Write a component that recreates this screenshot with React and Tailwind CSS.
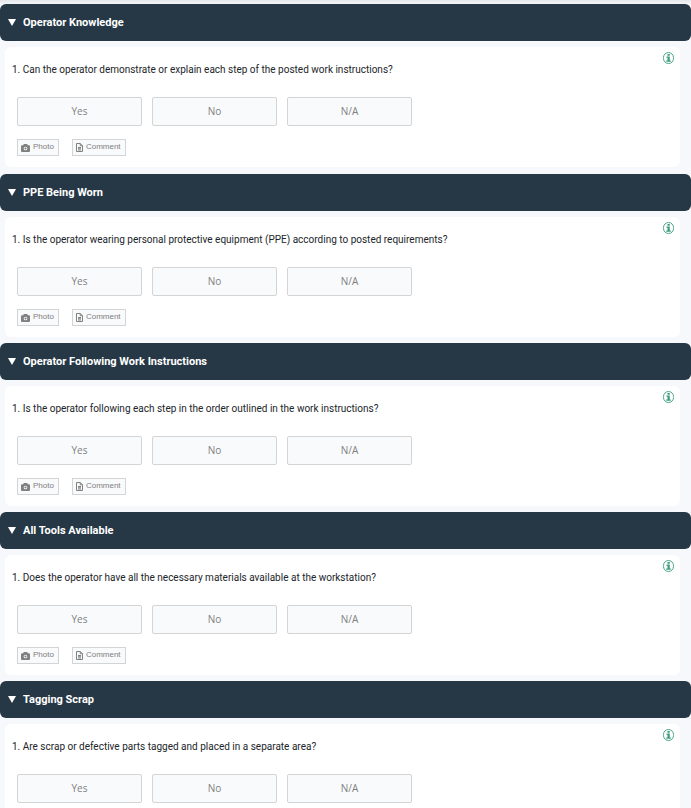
import React, { useState } from 'react';

const SECTIONS = [
    { title: 'Operator Knowledge', question: 'Can the operator demonstrate or explain each step of the posted work instructions?', attachments: true },
    { title: 'PPE Being Worn', question: 'Is the operator wearing personal protective equipment (PPE) according to posted requirements?', attachments: true },
    { title: 'Operator Following Work Instructions', question: 'Is the operator following each step in the order outlined in the work instructions?', attachments: true },
    { title: 'All Tools Available', question: 'Does the operator have all the necessary materials available at the workstation?', attachments: true },
    { title: 'Tagging Scrap', question: 'Are scrap or defective parts tagged and placed in a separate area?', attachments: false },
];

const ANSWERS = ['Yes', 'No', 'N/A'];

const CameraIcon = () => (
    <svg width="9" height="8" viewBox="0 0 18 16" aria-hidden="true">
        <path fill="currentColor" fillRule="evenodd" d="M5.500 0h7l1 2.500H16a2 2 0 0 1 2 2V14a2 2 0 0 1-2 2H2a2 2 0 0 1-2-2V4.500a2 2 0 0 1 2-2h2.500zM9 5.300a3.700 3.700 0 1 0 0 7.400 3.700 3.700 0 0 0 0-7.400zm0 1.500a2.200 2.200 0 1 1 0 4.400 2.200 2.200 0 0 1 0-4.400z" />
    </svg>
);

const NoteIcon = () => (
    <svg width="7" height="9" viewBox="0 0 14 18" fill="none" stroke="currentColor" strokeWidth="2" aria-hidden="true">
        <path d="M1 1h7.500L13 5.500V17H1z" />
        <path d="M8.500 1v4.500H13M4 9h6M4 11.500h6M4 14h6" />
    </svg>
);

const InfoIcon = () => (
    <svg width="11" height="12" viewBox="0 0 22 24" fill="none" aria-hidden="true">
        <rect x="1" y="1" width="20" height="22" rx="10" stroke="currentColor" strokeWidth="1.800" />
        <path fill="currentColor" d="M9 4h4.500v3.500H9zM7 9h6.500v8h2v2.500h-9V17H9v-5.500H7z" />
    </svg>
);

const Section = ({ title, question, attachments }) => {
    const [open, setOpen] = useState(true);
    const [answer, setAnswer] = useState(null);

    return (
        <section className="flex flex-col gap-1.5 first:mb-px">
            <h2>
                <button
                    type="button"
                    aria-expanded={open}
                    onClick={() => setOpen(!open)}
                    className="flex h-[37px] w-full items-center gap-[7px] rounded-md bg-[#263846] pl-2 text-left font-[Roboto,sans-serif] text-[11px] leading-4 font-bold text-white"
                >
                    <svg width="8" height="7" viewBox="0 0 8 7" className={open ? '' : '-rotate-90'} aria-hidden="true">
                        <path fill="currentColor" d="M0 0h8L4 7z" />
                    </svg>
                    {title}
                </button>
            </h2>

            {open && (
                <div className="relative mr-[11px] ml-[5px] rounded-md bg-white pt-[15px] pr-8 pb-[11px] pl-[7px]">
                    <button type="button" aria-label="More information" className="absolute top-[5px] right-1.5 text-[#3a9c7c]">
                        <InfoIcon />
                    </button>

                    <p className="font-[Roboto,sans-serif] text-[10px] leading-4 text-[#212529]">1. {question}</p>

                    <div className="mt-[19px] ml-[5px] flex gap-2.5">
                        {ANSWERS.map(label => (
                            <button
                                key={label}
                                type="button"
                                aria-pressed={answer === label}
                                onClick={() => setAnswer(label)}
                                className={`h-[29px] w-[125px] rounded-xs border border-[#d3d4d5] font-['Open_Sans',sans-serif] text-[10px] text-[#808080] ${answer === label ? 'bg-slate-200' : 'bg-[#f9fafc]'}`}
                            >
                                {label}
                            </button>
                        ))}
                    </div>

                    {attachments && (
                        <div className="mt-[13px] ml-[5px] flex gap-[13px] text-[8px] leading-3 text-[#808080]">
                            <button type="button" className="flex h-[17px] items-center gap-[3px] border border-[#d3d4d5] bg-[#f9fafc] pr-1 pl-[3px]">
                                <CameraIcon />
                                <span className="pb-0.5">Photo</span>
                            </button>
                            <button type="button" className="flex h-[17px] items-center gap-[3px] border border-[#d3d4d5] bg-[#f9fafc] pr-1 pl-[3px]">
                                <NoteIcon />
                                <span className="pb-0.5">Comment</span>
                            </button>
                        </div>
                    )}
                </div>
            )}
        </section>
    );
};

const App = () => (
    <main className="min-h-screen bg-[#f7f8fc] font-['Liberation_Sans',Arial,sans-serif]">
        <div className="h-1 bg-linear-to-b from-[#e6e7eb] to-[#f4f5f9]"></div>
        <div className="flex flex-col gap-1.5">
            {SECTIONS.map(section => (
                <Section key={section.title} {...section} />
            ))}
        </div>
    </main>
);

export default App;
